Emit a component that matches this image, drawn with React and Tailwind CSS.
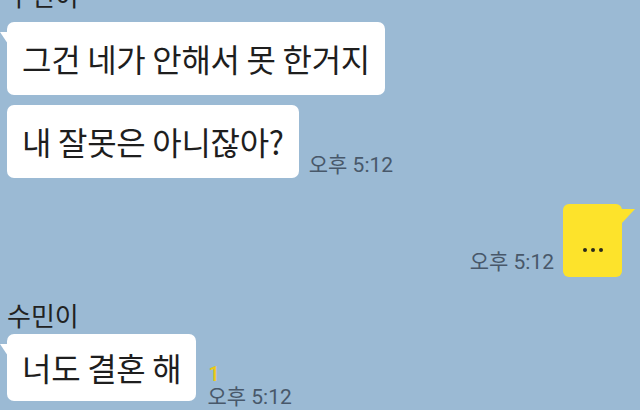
import React from 'react'

const FONT = { fontFamily: '"Noto Sans CJK KR", "Noto Sans", sans-serif' }
const TIME_FONT = { fontFamily: 'Roboto, "Noto Sans CJK KR", sans-serif' }

// --- bubble pieces ---
function Tail() {
  return (
    <svg className="absolute left-[-7px] top-[10px]" width="8" height="12" viewBox="0 0 8 12">
      <polygon points="0,0 8,0 8,12" fill="#fff" />
    </svg>
  )
}

function LeftBubble({ children, tail, h = 'h-[73px]' }) {
  return (
    <div className={`relative ${h} bg-white rounded-[7px] flex items-center pl-[15px] pr-[15px] text-[32px] text-[#1e1e1e] tracking-[-0.3px]`}>
      {tail && <Tail />}
      <span className="leading-none pb-[2px]">{children}</span>
    </div>
  )
}

function Time({ children }) {
  return (
    <span style={TIME_FONT} className="text-[21px] leading-[22px] text-[#48586a] whitespace-nowrap">
      {children}
    </span>
  )
}

export default function App() {
  return (
    <div style={FONT} className="w-[640px] h-[410px] overflow-hidden bg-[#9bbad4]">
      <div className="flex flex-col pl-[7px] pr-[18px]">

        <div className="text-[26px] leading-[30px] text-[#222] mt-[-20px] mb-[12px]">수민이</div>

        <div className="flex">
          <LeftBubble tail>그건 네가 안해서 못 한거지</LeftBubble>
        </div>

        <div className="flex items-end gap-[10px] mt-[10px]">
          <LeftBubble>내 잘못은 아니잖아?</LeftBubble>
          <div className="pb-[1px]"><Time>오후 5:12</Time></div>
        </div>

        <div className="flex items-end justify-end gap-[9px] mt-[26px]">
          <div className="pb-[3px]"><Time>오후 5:12</Time></div>
          <div className="relative w-[59px] h-[73px] bg-[#fde32b] rounded-[6px] flex items-center justify-center">
            <svg className="absolute right-[-13px] top-[5px]" width="14" height="15" viewBox="0 0 14 15">
              <polygon points="0,0 14,0 0,15" fill="#fde32b" />
            </svg>
            <div className="flex gap-[4px] mt-[18px]">
              <span className="w-[4px] h-[4px] rounded-full bg-[#2a2a1a]" />
              <span className="w-[4px] h-[4px] rounded-full bg-[#2a2a1a]" />
              <span className="w-[4px] h-[4px] rounded-full bg-[#2a2a1a]" />
            </div>
          </div>
        </div>

        <div className="text-[26px] leading-[30px] text-[#222] mt-[23px] mb-[4px]">수민이</div>

        <div className="flex items-end gap-[11px]">
          <LeftBubble tail h="h-[67px]">너도 결혼 해</LeftBubble>
          <div className="flex flex-col mb-[-7px]">
            <span style={TIME_FONT} className="text-[20px] leading-[24px] font-medium text-[#ecc812] pl-[1px]">1</span>
            <Time>오후 5:12</Time>
          </div>
        </div>

      </div>
    </div>
  )
}
